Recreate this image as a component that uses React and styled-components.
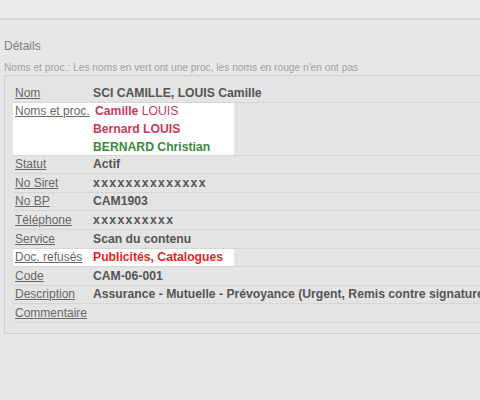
import React from "react";
import styled, { createGlobalStyle } from "styled-components";

const GlobalStyle = createGlobalStyle`
  html, body {
    margin: 0;
    padding: 0;
    background: #e7e7e7;
    overflow: hidden;
    font-family: "Liberation Sans", Arial, sans-serif;
  }
`;

const TopBar = styled.div`
  height: 18px;
  border-bottom: 2px solid #dadada;
  background: #e9e9e9;
`;

const Page = styled.div`
  padding: 19px 0 0 4px;
`;

const Title = styled.h2`
  margin: 0;
  font-size: 12px;
  line-height: 14px;
  font-weight: normal;
  color: #7f7f7f;
`;

const Hint = styled.p`
  margin: 9px 0 0;
  font-size: 10.2px;
  line-height: 12px;
  color: #a2a2a2;
  white-space: nowrap;
`;

const Panel = styled.div`
  margin-top: 1px;
  width: 640px;
  padding: 8px 8px 10px;
  background: #e4e4e4;
  border: 1px solid #cdcdcd;
  box-shadow: 0 1px 0 #d4d4d4;
`;

const Row = styled.div`
  display: grid;
  grid-template-columns: 80px 1fr;
  padding: 0.6px 0 0;
  border-bottom: 1px solid #d6d6d6;
  line-height: 17px;
  background: ${({ $highlight }) =>
    $highlight ? "linear-gradient(#fff, #fff) no-repeat 0 0 / 221px 100%" : "none"};
`;

const Label = styled.a`
  padding-left: 2px;
  font-size: 12px;
  color: #686868;
  text-decoration: underline;
  white-space: nowrap;
`;

const Value = styled.div`
  font-size: 12.2px;
  font-weight: bold;
  color: ${({ $color }) => $color || "#555"};
  letter-spacing: ${({ $masked }) => ($masked ? "1.35px" : "0")};
  white-space: nowrap;
`;

const NameList = styled.div`
  margin: -1px 0 -1.6px;
  line-height: 18px;
`;

const Name = styled.div`
  color: ${({ $proc }) => ($proc ? "#3b8a3b" : "#c9395c")};
  margin-left: ${({ $indent }) => ($indent ? "2px" : "0")};
`;

const Light = styled.span`
  font-weight: normal;
`;

const rows = [
  { label: "Statut", value: "Actif" },
  { label: "No Siret", value: "xxxxxxxxxxxxxx", masked: true },
  { label: "No BP", value: "CAM1903" },
  { label: "Téléphone", value: "xxxxxxxxxx", masked: true },
  { label: "Service", value: "Scan du contenu" },
  { label: "Doc. refusés", value: "Publicités, Catalogues", color: "#f01e1e", highlight: true },
  { label: "Code", value: "CAM-06-001" },
  {
    label: "Description",
    value: "Assurance - Mutuelle - Prévoyance (Urgent, Remis contre signature)",
  },
  { label: "Commentaire", value: "" },
];

export default function App() {
  return (
    <>
      <GlobalStyle />
      <TopBar />
      <Page>
        <Title>Détails</Title>
        <Hint>
          Noms et proc.: Les noms en vert ont une proc, les noms en rouge n'en ont pas
        </Hint>
        <Panel>
          <Row>
            <Label>Nom</Label>
            <Value>SCI CAMILLE, LOUIS Camille</Value>
          </Row>
          <Row $highlight>
            <Label>Noms et proc.</Label>
            <Value>
              <NameList>
                <Name $indent>
                  Camille <Light>LOUIS</Light>
                </Name>
                <Name>Bernard LOUIS</Name>
                <Name $proc>BERNARD Christian</Name>
              </NameList>
            </Value>
          </Row>
          {rows.map((r) => (
            <Row key={r.label} $highlight={r.highlight}>
              <Label>{r.label}</Label>
              <Value $color={r.color} $masked={r.masked}>
                {r.value}
              </Value>
            </Row>
          ))}
        </Panel>
      </Page>
    </>
  );
}
